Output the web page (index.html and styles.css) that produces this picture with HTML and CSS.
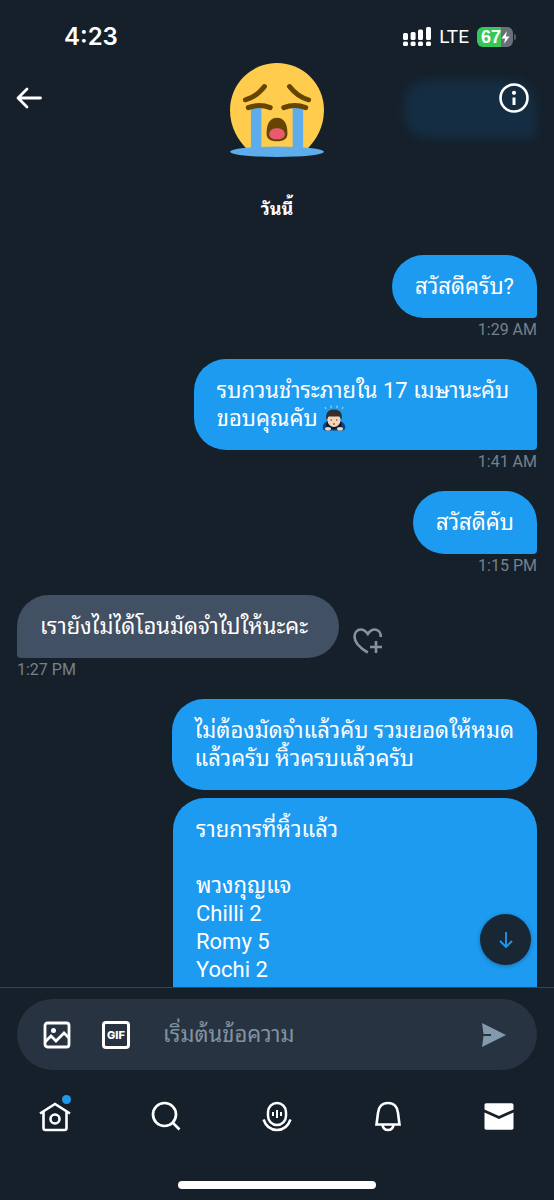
FILE: index.html
```
<!DOCTYPE html>
<html lang="th">
<head>
<meta charset="utf-8">
<meta name="viewport" content="width=device-width, initial-scale=1">
<title>ข้อความ</title>
<link rel="stylesheet" href="styles.css">
</head>
<body>
<div class="app">
  <div class="blurred-scroll" aria-hidden="true"></div>
  <div class="status">
    <span class="clock">4:23</span>
    <div class="status-right">
      <svg class="signal" viewBox="0 0 28 20" aria-hidden="true">
        <g fill="#fff">
          <rect x="0" y="6" width="5" height="7" rx="1.5"/><rect x="7.600" y="5" width="5" height="8" rx="1.500"/><rect x="15" y="2.500" width="5" height="10.500" rx="1.500"/><rect x="23" y="0" width="5" height="13" rx="1.500"/>
          <rect x="0" y="14.500" width="5" height="4.500" rx="1.500"/><rect x="7.600" y="14.500" width="5" height="4.500" rx="1.500"/><rect x="15" y="14.500" width="5" height="4.500" rx="1.500"/><rect x="23" y="14.500" width="5" height="4.500" rx="1.500"/>
        </g>
      </svg>
      <span class="network">LTE</span>
      <div class="battery">
        <span class="battery-level">67</span>
        <svg class="bolt" viewBox="0 0 10 14" aria-hidden="true"><path d="M6.500 0 0.500 8h4L3.500 14 9.500 5.800H5.500z" fill="#fff"/></svg>
      </div>
      <span class="battery-cap"></span>
    </div>
  </div>
  <header class="header">
    <button class="icon-btn" aria-label="กลับ">
      <svg class="back" viewBox="0 0 26 22" fill="none" stroke="#fff" stroke-width="2.800" stroke-linecap="round" stroke-linejoin="round"><path d="M11 2 2 11l9 9M2.500 11H24.500"/></svg>
    </button>
    <svg class="avatar" viewBox="0 0 36 36" role="img" aria-label="ร้องไห้">
      <path d="M36 18c0 6.500-3 11.500-6.500 15h-23C3 29.500 0 24.500 0 18a18 18 0 0 1 36 0z" fill="#ffcc4d"/>
      <ellipse cx="18" cy="34" rx="18" ry="2" fill="#5dadec"/>
      <path d="M8 17h4v17H8zM24 17h4v17h-4z" fill="#5dadec"/>
      <path d="M14 27c0-4 1.500-6 4-6s4 2 4 6c0 2-1.300 3-4 3s-4-1-4-3z" fill="#664500"/>
      <path d="M15 27c.3-1.400 1.400-2 3-2s2.700.6 3 2c.1 1.500-.9 2.200-3 2.200s-3.100-.7-3-2.200z" fill="#e75a70"/>
      <path d="M7 17.100q4.200-1.600 8.400 0M20.600 17.100q4.200-1.600 8.400 0M5.900 14.100c3.300-.9 5.300-2.500 7.300-5.100M30.100 14.100c-3.300-.9-5.300-2.500-7.300-5.100" fill="none" stroke="#664500" stroke-width="1.900" stroke-linecap="round"/>
    </svg>
    <button class="icon-btn end" aria-label="ข้อมูล">
      <svg class="info" viewBox="0 0 30 30"><circle cx="15" cy="15" r="13.500" fill="none" stroke="#fff" stroke-width="2.600"/><circle cx="15" cy="9.800" r="2.100" fill="#fff"/><path d="M13.500 14.500h3V22h-3z" fill="#fff"/></svg>
    </button>
  </header>
  <main class="thread">
    <div class="day">วันนี้</div>
    <section class="message sent">
      <p class="bubble">สวัสดีครับ?</p>
      <time class="time">1:29 AM</time>
    </section>
    <section class="message sent">
      <p class="bubble wrapped">รบกวนชำระภายใน 17 เมษานะคับ<br>ขอบคุณคับ<svg class="bow" viewBox="0 0 24 26" role="img" aria-label="โค้งคำนับ">
        <path d="M4 4 3 2M9 3V.5M15 3V.5M20 4l1-2" stroke="#a8c8df" stroke-width="1.300"/>
        <path d="M1 24c-1-4 1-7 6-8h10c5 1 7 4 6 8-1 2-4 1.500-7 1.500H8c-3 0-6 .5-7-1.500z" fill="#17407e"/>
        <path d="M5 16q7 10 14 0l1 5q-8 7-16 0z" fill="#0d1c34"/>
        <ellipse cx="12" cy="15" rx="6.500" ry="7" fill="#f6d4b8"/>
        <path d="M4.500 15C3 8 6 4.500 12 4.500S21 8 19.500 15l-2-3.500h-11z" fill="#33302f"/>
        <path d="M8.500 15h1.500M14 15h1.500M11 19h2" stroke="#5c3729" stroke-width="1"/>
        <path d="M6 20.500q6 4 12 0l-1 3H7z" fill="#0d1c34"/>
        <ellipse cx="6" cy="23.800" rx="3" ry="1.800" fill="#f6d4b8"/><ellipse cx="18" cy="23.800" rx="3" ry="1.800" fill="#f6d4b8"/>
      </svg></p>
      <time class="time">1:41 AM</time>
    </section>
    <section class="message sent">
      <p class="bubble">สวัสดีคับ</p>
      <time class="time">1:15 PM</time>
    </section>
    <section class="message received">
      <div class="row">
        <p class="bubble">เรายังไม่ได้โอนมัดจำไปให้นะคะ</p>
        <button class="react" aria-label="แสดงความรู้สึก">
          <svg viewBox="0 0 30 26" fill="none" stroke="#8492a3" stroke-width="2.600"><path d="M14.800 24.500C7 20 1.500 14.500 1.500 8.500c0-4 2.800-7 6.200-7 3 0 5 1.500 7.100 4.500 2-3 4-4.500 7-4.500 3.500 0 6 3 6 7.500M23 13v12M17 19h12"/></svg>
        </button>
      </div>
      <time class="time">1:27 PM</time>
    </section>
    <div class="group">
      <p class="bubble joined">ไม่ต้องมัดจำแล้วคับ รวมยอดให้หมด<br>แล้วครับ หิ้วครบแล้วครับ</p>
      <p class="bubble joined list">รายการที่หิ้วแล้ว<br><br>พวงกุญแจ<br>Chilli 2<br>Romy 5<br>Yochi 2<br>&nbsp;<br>&nbsp;</p>
    </div>
    <button class="to-latest" aria-label="ไปที่ข้อความล่าสุด">
      <svg viewBox="0 0 16 18" fill="none" stroke="#1d9bf0" stroke-width="1.800"><path d="M8 1v15M2 10l6 6 6-6"/></svg>
    </button>
  </main>
  <footer class="footer">
    <form class="composer">
      <button type="button" class="tool" aria-label="รูปภาพ">
        <svg viewBox="0 0 28 28" fill="none" stroke="#fff" stroke-width="2.800"><rect x="2" y="2" width="24" height="24" rx="2.500"/><path d="m2 21 6-6 5 5 8-8 5 5"/><circle cx="10.500" cy="9.500" r="2.500" fill="#fff" stroke="none"/></svg>
      </button>
      <button type="button" class="tool gif" aria-label="GIF">GIF</button>
      <input class="entry" type="text" placeholder="เริ่มต้นข้อความ" aria-label="เริ่มต้นข้อความ">
      <button type="button" class="send" aria-label="ส่ง">
        <svg viewBox="0 0 24 24" fill="#829aab"><path d="M0 0 24 12 0 24 1.500 13H9V11H1.500z"/></svg>
      </button>
    </form>
    <nav class="tabs">
      <a href="#home" aria-label="หน้าแรก"><svg viewBox="0 0 32 32" fill="none" stroke="#fff" stroke-width="2.600"><path d="M1 13.500 16 4l15 9.500M4.500 12v16c0 1 .8 2 2 2h19c1.200 0 2-1 2-2V12"/><circle cx="16" cy="19" r="4.500"/></svg><span class="dot"></span></a>
      <a href="#search" aria-label="ค้นหา"><svg viewBox="0 0 32 32" fill="none" stroke="#fff" stroke-width="2.700"><circle cx="14.500" cy="14.500" r="11.500"/><path d="m22.500 22.500 7 7"/></svg></a>
      <a href="#spaces" aria-label="สเปซ"><svg viewBox="0 0 32 32" fill="none" stroke="#fff" stroke-width="2.500"><rect x="7" y="3" width="18" height="22" rx="9"/><path d="M2.500 19.500C5 26.500 10 30 16 30s11-3.500 13.500-10.500"/><path d="M12 12v4M16 10v8M20 12v4" stroke-width="2"/></svg></a>
      <a href="#notifications" aria-label="การแจ้งเตือน"><svg viewBox="0 0 32 32" fill="none" stroke="#fff" stroke-width="2.600"><path d="M4.500 24.500 6 13C6.500 7 10 3 16 3s9.500 4 10 10l1.500 11.500zM10.500 25c.5 3 2.500 5 5.500 5s5-2 5.500-5"/></svg></a>
      <a href="#messages" aria-label="ข้อความ"><svg viewBox="0 0 32 32" fill="#fff"><path d="M1.500 5c0-1 .8-1.700 1.700-1.700h25.600c.9 0 1.700.7 1.700 1.700v4.500L16 16 1.500 9.500zM1.500 12.500 16 19l14.500-6.500V28c0 1-.8 1.700-1.700 1.700H3.200c-.9 0-1.700-.7-1.700-1.700z"/></svg></a>
    </nav>
    <div class="home-bar"></div>
  </footer>
</div>
</body>
</html>
```
FILE: styles.css
```
* { box-sizing: border-box; }
body {
  margin: 0;
  background: #15202b;
  color: #fff;
  font-family: Roboto, "Noto Sans Thai Looped", "Loma", "Noto Sans Thai", "Liberation Sans", sans-serif;
}
button { padding: 0; border: 0; background: none; color: inherit; font: inherit; display: flex; }
svg { display: block; }
p { margin: 0; }
.app { position: relative; display: flex; flex-direction: column; height: 100vh; overflow: hidden; }
.blurred-scroll {
  position: absolute; top: 80px; right: 18px; width: 132px; height: 58px;
  border-radius: 24px 24px 4px 24px; background: #152d42; filter: blur(5px);
}
.status, .header { position: relative; display: flex; justify-content: space-between; }
.status { height: 62px; padding: 22px 38px 0 64px; align-items: flex-start; }
.clock { font-family: Inter, sans-serif; font-size: 24px; line-height: 30px; font-weight: 600; }
.status-right { display: flex; align-items: center; height: 30px; }
.signal { width: 28px; height: 20px; }
.network { margin: 0 8px; font-family: Roboto, sans-serif; font-size: 19px; line-height: 30px; }
.battery {
  display: flex; align-items: center; width: 36px; height: 20px; padding-left: 4px;
  border-radius: 6px; background: linear-gradient(90deg, #34c759 67%, #6a7078 67%);
}
.battery-level { font-family: "Liberation Sans", sans-serif; font-size: 18px; line-height: 20px; font-weight: 700; }
.bolt { width: 9px; height: 13px; }
.battery-cap { width: 2px; height: 6px; margin-left: 1px; border-radius: 0 2px 2px 0; background: #565d66; }
.header { padding: 0 16px; height: 96px; }
.icon-btn { flex: 1; height: 30px; margin-top: 21px; align-items: center; }
.icon-btn.end { justify-content: flex-end; }
.back { width: 26px; height: 22px; }
.info { width: 30px; height: 30px; margin-right: 9px; }
.avatar { width: 94px; height: 96px; }
.thread {
  position: relative; flex: 1; min-height: 0; overflow: hidden; padding: 36px 17px 0;
  display: flex; flex-direction: column; gap: 17px; border-bottom: 1px solid #38444d;
}
.day { flex: none; height: 44px; font-size: 18px; line-height: 30px; font-weight: 700; text-align: center; }
.message, .group { flex: none; display: flex; flex-direction: column; align-items: flex-end; }
.message.received { align-items: flex-start; }
.group { gap: 8px; }
.row { display: flex; align-items: center; gap: 14px; width: 100%; }
.bubble {
  padding: 18px 23px 17px; border-radius: 32px 32px 4px 32px; background: #1d9bf0;
  font-size: 22px; line-height: 28px; white-space: nowrap;
}
.bubble.wrapped { min-width: 66%; }
.received .bubble { min-width: 62%; border-radius: 32px 32px 32px 4px; background: #425063; }
.bubble.joined { border-radius: 32px; }
.bubble.list { width: 70%; border-bottom-right-radius: 4px; }
.time { height: 24px; color: #75818d; font-size: 16px; line-height: 24px; }
.bow { display: inline-block; width: 24px; height: 26px; margin-left: 4px; vertical-align: -5px; }
.react { margin-top: 28px; }
.react svg { width: 30px; height: 26px; }
.to-latest {
  position: absolute; right: 23px; bottom: 22px; width: 51px; height: 51px; border-radius: 50%;
  align-items: center; justify-content: center; background: #192734; box-shadow: 0 1px 4px #0b182655;
}
.to-latest svg { width: 16px; height: 18px; }
.footer { padding: 11px 17px 11px; }
.composer { display: flex; align-items: center; height: 71px; padding: 0 31px 0 26px; border-radius: 36px; background: #273340; }
.tool { width: 28px; height: 28px; margin-right: 31px; }
.tool svg { width: 28px; height: 28px; }
.gif {
  align-items: center; justify-content: center; border: 3px solid #fff; border-radius: 4px;
  font-family: Inter, sans-serif; font-size: 11px; font-weight: 800;
}
.entry {
  flex: 1; min-width: 0; padding: 0 2px; border: 0; outline: 0; background: none; color: #fff;
  font-family: inherit; font-size: 22px; line-height: 30px; height: 40px;
}
.entry::placeholder { color: #8292a2; opacity: 1; }
.send svg { width: 24px; height: 24px; }
.tabs { display: flex; justify-content: space-between; padding: 30px 22px 0; }
.tabs a { position: relative; }
.tabs svg { width: 32px; height: 32px; }
.dot { position: absolute; top: -5px; right: 0; width: 9px; height: 9px; border-radius: 50%; background: #1d9bf0; }
.home-bar { width: 36%; min-width: 198px; height: 8px; margin: 49px auto 0; border-radius: 4px; background: #fff; }
```
